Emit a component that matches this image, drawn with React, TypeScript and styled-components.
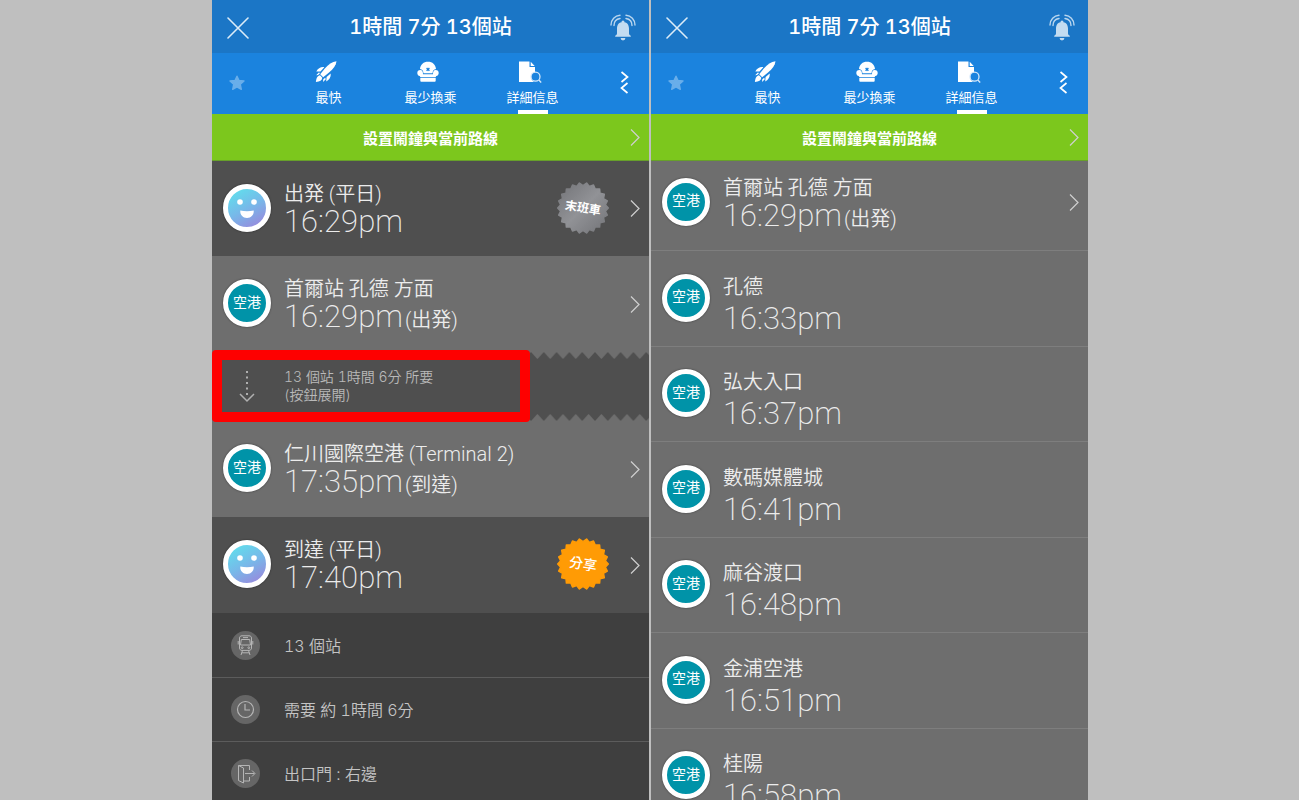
import React from "react";
import styled, { createGlobalStyle, css } from "styled-components";

const GlobalStyle = createGlobalStyle`
  * { box-sizing: border-box; }
  body {
    margin: 0;
    background: #bfbfbf;
    font-family: Inter, "Noto Sans CJK TC", sans-serif;
    font-variant-numeric: tabular-nums;
    color: #fff;
  }
  button { font: inherit; font-variant-numeric: inherit; color: inherit; background: none; border: 0; padding: 0; cursor: pointer; }
  h1, p, ul, ol { margin: 0; padding: 0; font-weight: inherit; list-style: none; }
  svg { display: block; flex: none; }
`;

const Page = styled.main`
  height: 100vh;
  overflow: hidden;
  padding-left: 1px;
`;

const Screens = styled.div`
  display: grid;
  grid-template-columns: 1fr 1fr;
  gap: 2px;
  max-width: 876px;
  height: 100%;
  margin: 0 auto;
`;

const Screen = styled.section`
  display: flex;
  flex-direction: column;
  min-width: 0;
  overflow: hidden;
  background: #6e6e6e;
`;

const TopBar = styled.header`
  flex: none;
  display: grid;
  grid-template-columns: 52px 1fr 52px;
  align-items: center;
  height: 53px;
  background: #1b76c6;
`;

const IconButton = styled.button`
  display: grid;
  place-items: center;
  height: 100%;
  padding-top: 2px;
`;

const Heading = styled.h1`
  text-align: center;
  font-size: 20px;
  line-height: 24px;
  font-weight: 500;
`;

const TabBar = styled.nav`
  flex: none;
  display: grid;
  grid-template-columns: 50px 1fr 50px;
  height: 61px;
  background: #1b83de;
  ${IconButton} { padding: 0 0 2px; }
`;

const Tabs = styled.div`
  display: grid;
  grid-template-columns: repeat(3, 102px);
  justify-content: center;
`;

const Tab = styled.button<{ $active?: boolean }>`
  display: flex;
  flex-direction: column;
  align-items: center;
  padding-top: 8px;
  font-size: 13px;
  line-height: 18px;
  svg { margin: 0 5px 5px 0; }
  &::after {
    content: "";
    width: 30px;
    height: 4px;
    margin-top: auto;
    background: ${(p) => (p.$active ? "#fff" : "transparent")};
  }
`;

const AlarmBar = styled.button`
  flex: none;
  display: grid;
  grid-template-columns: 20px 1fr 20px;
  align-items: center;
  height: 47px;
  padding: 0 9px;
  background: #7cc71d;
  border-bottom: 1px solid #67a02a;
  font-size: 15px;
  font-weight: 700;
  svg { justify-self: end; }
`;

const StopRow = styled.li<{ $dark?: boolean; $short?: boolean }>`
  display: flex;
  align-items: center;
  height: ${(p) => (p.$short ? 95 : 96)}px;
  padding: 0 9px 2px 11px;
  background: ${(p) => (p.$dark ? "#4f4f4f" : "#6e6e6e")};
  > svg { margin-top: 2px; }
`;

const StopList = styled.ol<{ $lined?: boolean }>`
  flex: none;
  ${(p) =>
    p.$lined &&
    css`
      ${StopRow} { border-bottom: 1px solid #7e7e7e; }
      ${StopRow}:nth-child(odd) { height: 95px; }
      ${StopRow}:first-child { height: 90px; padding-bottom: 8px; }
    `}
`;

const LineBadge = styled.span`
  flex: none;
  display: grid;
  place-items: center;
  width: 48px;
  height: 48px;
  padding-bottom: 3px;
  border: 5px solid #fff;
  border-radius: 50%;
  background: #0093a8;
  box-shadow: 0 0 2px rgba(0, 0, 0, 0.5);
  font-size: 14px;
  line-height: 18px;
`;

const FaceBadge = styled(LineBadge)`
  padding: 0;
  background: linear-gradient(150deg, #62dcec 10%, #77b9e9 50%, #9a86dc 95%);
`;

const StopText = styled.div<{ $tall?: boolean }>`
  flex: 1;
  min-width: 0;
  padding-left: 13px;
  font-family: Roboto, "Noto Sans CJK TC", sans-serif;
  color: #ececec;
  ${(p) =>
    p.$tall &&
    css`
      padding-top: 10px;
      p + p { padding-top: 4px; }
    `}
`;

const StopName = styled.p`
  font-size: 20px;
  line-height: 28px;
  font-weight: 350;
`;

const StopTime = styled.p`
  display: flex;
  align-items: baseline;
  gap: 2px;
  font-size: 31px;
  line-height: 28px;
  font-weight: 200;
  small { font-size: 20px; line-height: 20px; font-weight: 350; }
`;

const SealButton = styled.button`
  display: grid;
  place-items: center;
  margin-right: 21px;
  > * { grid-area: 1 / 1; }
`;

const SealLabel = styled.span<{ $large?: boolean }>`
  font-size: ${(p) => (p.$large ? 14 : 12)}px;
  line-height: 18px;
  font-weight: ${(p) => (p.$large ? 500 : 700)};
  transform: rotate(9deg);
`;

const Expand = styled.li`
  position: relative;
  display: flex;
  height: 69px;
  background: #4f4f4f;
`;

const ZigZag = styled.svg<{ $bottom?: boolean }>`
  position: absolute;
  left: 0;
  width: 100%;
  ${(p) => (p.$bottom ? "bottom: 0;" : "top: 0;")}
`;

const ExpandButton = styled.button`
  position: relative;
  display: flex;
  align-items: center;
  gap: 28px;
  width: 318px;
  height: 72px;
  margin-top: -2px;
  padding-left: 16px;
  border: 10px solid #fe0000;
  border-radius: 4px;
  background: #4f4f4f;
  text-align: left;
  color: #b9b9b9;
  font-size: 14px;
  line-height: 18px;
  font-weight: 350;
`;

const FactList = styled.ul`
  flex: 1;
  padding-top: 1px;
  background: #3f3f3f;
`;

const Fact = styled.li`
  display: flex;
  align-items: center;
  gap: 24px;
  height: 64px;
  padding-left: 19px;
  border-bottom: 1px solid #5c5c5c;
  font-size: 16px;
  line-height: 22px;
  font-weight: 350;
  color: #c4c4c4;
`;

const FactIcon = styled.span`
  display: grid;
  place-items: center;
  width: 29px;
  height: 29px;
  border-radius: 50%;
  background: #666;
`;

const CloseIcon = () => (
  <svg width="22" height="22" viewBox="0 0 22 22" stroke="#dcecf8" strokeWidth="1.6" strokeLinecap="round">
    <path d="M1 1 21 21M21 1 1 21" />
  </svg>
);

const BellIcon = () => (
  <svg width="26" height="28" viewBox="0 0 26 28" fill="none" stroke="#b9d6ef" strokeWidth="1.4" strokeLinecap="round">
    <path fill="#c3dcf1" stroke="none" d="M13 8c-3.900 0-6 2.800-6 6.500v5c0 .9-.6 1.400-1.800 2.300v.9h15.600v-.9C19.600 20.900 19 20.400 19 19.500v-5C19 10.800 16.900 8 13 8ZM10.600 24h4.800a2.400 2.400 0 0 1-4.800 0Z" />
    <circle cx="13" cy="8" r="1.500" fill="#c3dcf1" stroke="none" />
    <path d="M1 11C1 5.500 5 1.500 10 1.200M4 11.500C4 7.500 6.500 5 10 4.500M25 11C25 5.500 21 1.500 16 1.200M22 11.500C22 7.500 19.500 5 16 4.500" />
  </svg>
);

const StarIcon = () => (
  <svg width="16" height="16" viewBox="0 0 16 16" fill="#69aeea" stroke="#69aeea" strokeWidth="1.400" strokeLinejoin="round">
    <path d="m8 1.200 2 4.300 5 .5-3.700 3.300 1 5L8 11.900l-4.300 2.400 1-5L1 6l5-.5Z" />
  </svg>
);

const RocketIcon = () => (
  <svg width="22" height="22" viewBox="0 0 22 22" fill="#fff">
    <path d="M21.500.3c-4.500.5-8 3-11.700 7.300L5.200 13.300l3 3 5.800-4.700C18.500 7.800 21 4.500 21.500.3Z" />
    <path d="M9.300 6.200C5.800 5.700 3 7.500 1.300 10.600l4.200-.2ZM15.700 12.600c.4 3.500-1.300 6.300-4.500 8l.4-4.500Z" />
    <path d="M5 14.300C2.600 14.800 1.300 16.700.9 21c4.100-.3 6.100-1.600 6.400-4.200Z" />
    <path d="m1.200 14.200 2.600-2.700 1.300.6-2 2ZM8.300 18.300l1.900-1.500.6 1.500-2.800 2.800Z" />
  </svg>
);

const SeatIcon = () => (
  <svg width="22" height="22" viewBox="0 0 22 22" fill="#fff">
    <path d="M3 8C3.500 3.500 6.500.8 11 .8S18.500 3.500 19 8c-2.200.3-3.300 1.700-3.500 4.200h-9C6.300 9.700 5.200 8.300 3 8Z" />
    <path d="M3.300 9C5.500 9 6 11 6 13.200h10C16 11 16.500 9 18.700 9c1.900 0 3 1.200 3 2.900 0 1.600-.9 2.800-2.400 3.100l-.8 1.200h-15l-.8-1.200C1.200 14.700.3 13.500.3 11.900.3 10.200 1.400 9 3.300 9Z" />
    <path d="M3.300 17h15.400v2.500c0 .9-.4 1.300-1.200 1.300h-13c-.8 0-1.200-.4-1.200-1.300Z" />
    <path d="m9.600 7 2.800 2.800m0-2.800L9.600 9.800" stroke="#1b83de" strokeWidth="1.300" />
  </svg>
);

const DetailIcon = () => (
  <svg width="24" height="22" viewBox="0 0 24 22">
    <path fill="#fff" d="M1 .5h10.500V6H17v5a5.500 5.500 0 0 0-1 10H1ZM12.700.8 16.700 5h-4Z" />
    <circle cx="17.500" cy="15.700" r="4.500" fill="#1b83de" stroke="#d5e8fa" strokeWidth="1.300" />
    <path d="m20.800 19 2.400 2.500" stroke="#d5e8fa" strokeWidth="1.300" />
  </svg>
);

const SwitchIcon = () => (
  <svg width="9" height="23" viewBox="0 0 9 23" fill="none" stroke="#fff" strokeWidth="1.700">
    <path d="m1.500 1 6 5-6 5M7.500 12l-6 5 6 5" />
  </svg>
);

const ChevronIcon = () => (
  <svg width="10" height="17" viewBox="0 0 10 17" fill="none" stroke="#d0d0d0" strokeWidth="1.200">
    <path d="M1 .5 9 8.500l-8 8" />
  </svg>
);

const FaceIcon = () => (
  <svg width="38" height="38" viewBox="0 0 38 38" fill="#fff">
    <circle cx="12" cy="13" r="2.800" />
    <circle cx="26" cy="13" r="2.800" />
    <path d="M12.300 21.500c4 1 9.400 1 13.400 0 .5 4.300-2.700 7.500-6.700 7.500s-7.200-3.200-6.700-7.500Z" />
  </svg>
);

const TEETH = 22;
const sealPoints = Array.from({ length: TEETH * 2 }, (_, i) => {
  const radius = i % 2 ? 22.5 : 25.3;
  const angle = ((i + 1) * Math.PI) / TEETH;
  return `${(26 + radius * Math.sin(angle)).toFixed(1)},${(26 - radius * Math.cos(angle)).toFixed(1)}`;
}).join(" ");

const SealShape = ({ fill }: { fill: string }) => (
  <svg width="52" height="52" viewBox="0 0 52 52">
    <defs>
      <linearGradient id="silver" x1="0" y1="0" x2="1" y2="1">
        <stop offset="0" stopColor="#727377" />
        <stop offset=".5" stopColor="#919296" />
        <stop offset="1" stopColor="#727377" />
      </linearGradient>
    </defs>
    <polygon points={sealPoints} fill={fill} stroke={fill} strokeWidth="1.500" strokeLinejoin="round" />
  </svg>
);

const DotArrowIcon = () => (
  <svg width="18" height="33" viewBox="0 0 18 33" fill="none" stroke="#b0b0b0" strokeWidth="1.500">
    <path d="M9 1v24" strokeWidth="2" strokeDasharray="2 3.500" />
    <path d="m2 24 7 7 7-7" />
  </svg>
);

const TrainIcon = () => (
  <svg width="17" height="21" viewBox="0 0 17 21" fill="none" stroke="#b5b5b5" strokeWidth="1">
    <path d="M5 .8h7c1.500 0 2.500.8 2.500 2.200v10c0 1.400-1 2.400-2.500 2.400H5c-1.500 0-2.500-1-2.500-2.400V3C2.500 1.600 3.500.8 5 .8ZM4.300 4.500h8.400L13.500 10h-10ZM6 2.600h5M1.200 6v3.500M15.800 6v3.500M5.500 15.500 4 20M11.500 15.500 13 20M4.700 17.800h7.600" />
    <circle cx="5.200" cy="12.700" r=".9" />
    <circle cx="11.800" cy="12.700" r=".9" />
  </svg>
);

const ClockIcon = () => (
  <svg width="19" height="19" viewBox="0 0 19 19" fill="none" stroke="#b5b5b5" strokeWidth="1.200">
    <circle cx="9.500" cy="9.500" r="8" />
    <path d="M9 4v6h5" />
  </svg>
);

const ExitIcon = () => (
  <svg width="20" height="20" viewBox="0 0 20 20" fill="none" stroke="#b5b5b5" strokeWidth="1">
    <path d="M2.500 1.500h11V6M13.500 13v4H7.500M2.500 1.500 7.500 4v15l-5-2.500ZM9 9.500h9.500M16 6.500l3 3-3 3" />
  </svg>
);

const ScreenTop = () => (
  <>
    <TopBar>
      <IconButton aria-label="關閉"><CloseIcon /></IconButton>
      <Heading>1時間 7分 13個站</Heading>
      <IconButton aria-label="鬧鐘"><BellIcon /></IconButton>
    </TopBar>
    <TabBar>
      <IconButton aria-label="收藏"><StarIcon /></IconButton>
      <Tabs>
        <Tab><RocketIcon />最快</Tab>
        <Tab><SeatIcon />最少換乘</Tab>
        <Tab $active><DetailIcon />詳細信息</Tab>
      </Tabs>
      <IconButton aria-label="切換"><SwitchIcon /></IconButton>
    </TabBar>
    <AlarmBar>
      <span />
      <span>設置鬧鐘與當前路線</span>
      <ChevronIcon />
    </AlarmBar>
  </>
);

type StopProps = {
  name: string;
  time: string;
  note?: string;
  face?: boolean;
  dark?: boolean;
  short?: boolean;
  tall?: boolean;
  chevron?: boolean;
  seal?: { label: string; fill: string; large?: boolean };
};

const Stop = ({ name, time, note, face, dark, short, tall, chevron, seal }: StopProps) => (
  <StopRow $dark={dark} $short={short}>
    {face ? <FaceBadge><FaceIcon /></FaceBadge> : <LineBadge>空港</LineBadge>}
    <StopText $tall={tall}>
      <StopName>{name}</StopName>
      <StopTime>{time}{note && <small>{note}</small>}</StopTime>
    </StopText>
    {seal && (
      <SealButton>
        <SealShape fill={seal.fill} />
        <SealLabel $large={seal.large}>{seal.label}</SealLabel>
      </SealButton>
    )}
    {chevron && <ChevronIcon />}
  </StopRow>
);

const Teeth = ({ bottom }: { bottom?: boolean }) => {
  const id = bottom ? "teeth-bottom" : "teeth-top";
  return (
    <ZigZag $bottom={bottom} height="7">
      <defs>
        <pattern id={id} width="12.800" height="7" x="-1" patternUnits="userSpaceOnUse">
          <path d={bottom ? "M0 7 6.400 0l6.400 7Z" : "M0 0l6.400 7L12.800 0Z"} fill="#6e6e6e" />
        </pattern>
      </defs>
      <rect width="100%" height="7" fill={`url(#${id})`} />
    </ZigZag>
  );
};

const stations = [
  ["孔德", "16:33pm"],
  ["弘大入口", "16:37pm"],
  ["數碼媒體城", "16:41pm"],
  ["麻谷渡口", "16:48pm"],
  ["金浦空港", "16:51pm"],
  ["桂陽", "16:58pm"],
];

export default function App() {
  return (
    <>
      <GlobalStyle />
      <Page>
        <Screens>
          <Screen>
            <ScreenTop />
            <StopList>
              <Stop name="出発 (平日)" time="16:29pm" face dark short chevron seal={{ label: "末班車", fill: "url(#silver)" }} />
              <Stop name="首爾站 孔德 方面" time="16:29pm" note="(出発)" chevron />
              <Expand>
                <Teeth />
                <Teeth bottom />
                <ExpandButton>
                  <DotArrowIcon />
                  <span>13 個站 1時間 6分 所要<br />(按鈕展開)</span>
                </ExpandButton>
              </Expand>
              <Stop name="仁川國際空港 (Terminal 2)" time="17:35pm" note="(到達)" chevron />
              <Stop name="到達 (平日)" time="17:40pm" face dark chevron seal={{ label: "分享", fill: "#ff9b05", large: true }} />
            </StopList>
            <FactList>
              <Fact><FactIcon><TrainIcon /></FactIcon>13 個站</Fact>
              <Fact><FactIcon><ClockIcon /></FactIcon>需要 約 1時間 6分</Fact>
              <Fact><FactIcon><ExitIcon /></FactIcon>出口門 : 右邊</Fact>
            </FactList>
          </Screen>
          <Screen>
            <ScreenTop />
            <StopList $lined>
              <Stop name="首爾站 孔德 方面" time="16:29pm" note="(出発)" chevron />
              {stations.map(([name, time]) => (
                <Stop key={name} name={name} time={time} tall />
              ))}
            </StopList>
          </Screen>
        </Screens>
      </Page>
    </>
  );
}
